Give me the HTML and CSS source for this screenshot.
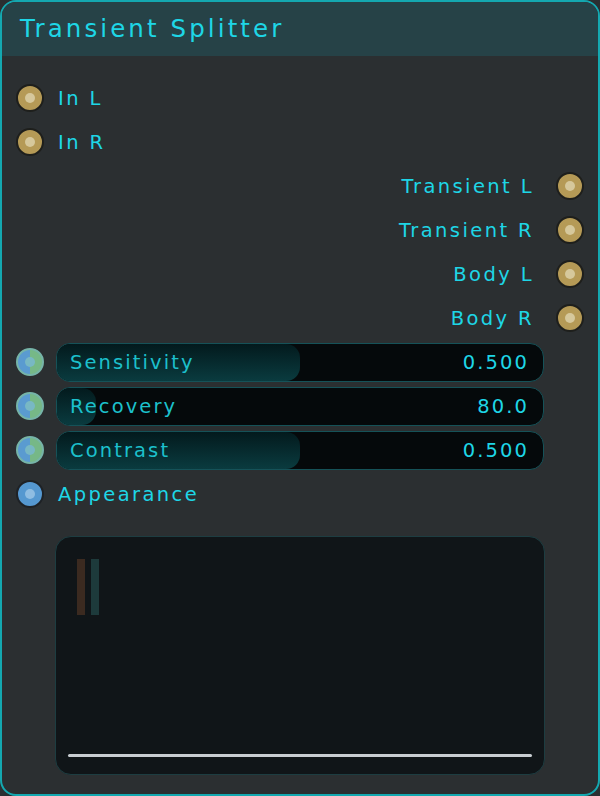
FILE: index.html
```html
<!DOCTYPE html>
<html>
<head>
<meta charset="utf-8">
<link rel="stylesheet" href="styles.css">
</head>
<body>
<div class="node">
  <div class="header">Transient Splitter</div>
  <div class="content">
    <div class="row in"><span class="sock gold"></span><span class="label">In L</span></div>
    <div class="row in"><span class="sock gold"></span><span class="label">In R</span></div>
    <div class="row out"><span class="label">Transient L</span><span class="sock gold"></span></div>
    <div class="row out"><span class="label">Transient R</span><span class="sock gold"></span></div>
    <div class="row out"><span class="label">Body L</span><span class="sock gold"></span></div>
    <div class="row out"><span class="label">Body R</span><span class="sock gold"></span></div>
    <div class="row param"><span class="sock split"></span>
      <div class="slider"><div class="fill" style="width:50%"></div><span class="sname">Sensitivity</span><span class="sval">0.500</span></div>
    </div>
    <div class="row param"><span class="sock split"></span>
      <div class="slider"><div class="fill" style="width:8%"></div><span class="sname">Recovery</span><span class="sval">80.0</span></div>
    </div>
    <div class="row param"><span class="sock split"></span>
      <div class="slider"><div class="fill" style="width:50%"></div><span class="sname">Contrast</span><span class="sval">0.500</span></div>
    </div>
    <div class="row in"><span class="sock blue"></span><span class="label">Appearance</span></div>
    <div class="preview">
      <div class="bars"><span class="bar brown"></span><span class="bar teal"></span></div>
      <div class="line"></div>
    </div>
  </div>
</div>
</body>
</html>
```

FILE: styles.css
```css
html, body { margin: 0; padding: 0; background: #2b2f31; }
body { font-family: "DejaVu Sans", "Lato", sans-serif; }
.node {
  width: 600px; height: 796px; box-sizing: border-box;
  border: 2px solid #14a8b0; border-radius: 16px; overflow: hidden;
  background: #2b2f31; display: flex; flex-direction: column;
}
.header {
  height: 54px; background: #264247; color: #1ed6e6;
  font-size: 24.5px; letter-spacing: 3.1px; line-height: 54px;
  padding-left: 18px; box-sizing: border-box;
}
.content { padding: 20px 14px 0 14px; display: flex; flex-direction: column; }
.row { height: 44px; display: flex; align-items: center; }
.row.out { justify-content: flex-end; }
.label { color: #1ed6e6; font-size: 19.5px; letter-spacing: 2.4px; line-height: 24px; padding-top: 2px; }
.row.in .label { margin-left: 14px; }
.row.out .label { margin-right: 22px; }
.sock {
  width: 28px; height: 28px; border-radius: 50%; box-sizing: border-box;
  flex: none; position: relative;
}
.sock::after {
  content: ""; position: absolute; left: 50%; top: 50%;
  width: 10px; height: 10px; margin: -5px 0 0 -5px; border-radius: 50%;
}
.sock.gold { background: #b59a56; border: 2px solid #1e1f1c; }
.sock.gold::after { background: #d6c89c; }
.sock.blue { background: #5598d0; border: 2px solid #1e2226; }
.sock.blue::after { background: #8fbde2; }
.sock.split {
  background: linear-gradient(90deg, #5a9bd0 50%, #76b887 50%);
  border: 2px solid #76b4a8;
}
.sock.split::after { background: #78b8c4; }
.slider {
  margin-left: 12px; width: 488px; height: 39px; box-sizing: border-box;
  border: 1px solid #155258; border-radius: 14px; background: #05090b;
  position: relative; overflow: hidden;
  display: flex; align-items: center; justify-content: space-between;
  padding: 0 14px 0 13px;
}
.fill {
  position: absolute; left: 0; top: 0; bottom: 0;
  border-radius: 0 14px 14px 0;
  background: linear-gradient(180deg, #031a1d 0%, #0a3b3f 100%);
}
.sname, .sval { position: relative; font-size: 19.5px; letter-spacing: 2.1px; line-height: 24px; padding-top: 2px; }
.sname { color: #1cc0cc; }
.sval { color: #1ed6e6; }
.preview {
  margin: 20px 0 0 39px; width: 490px; height: 239px; box-sizing: border-box;
  background: #101518; border: 1px solid #1d3d41; border-radius: 16px;
  display: flex; flex-direction: column; justify-content: space-between;
  padding: 22px 12px 17px 12px;
}
.bars { display: flex; gap: 6px; padding-left: 9px; }
.bar { width: 8px; height: 56px; }
.bar.brown { background: #3b2a20; }
.bar.teal { background: #1d3a3b; }
.line { height: 3px; border-radius: 2px; background: #c8cdd1; }
```
